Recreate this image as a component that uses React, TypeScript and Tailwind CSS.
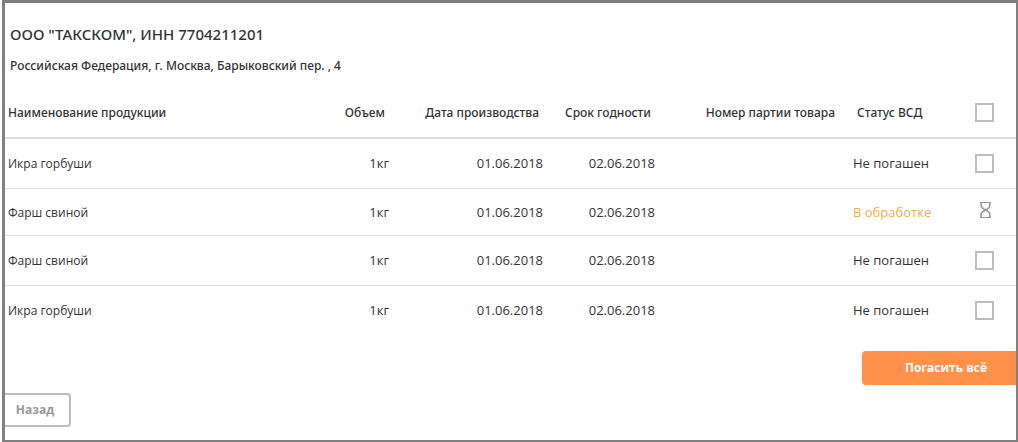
import { useState } from 'react'
import clsx from 'clsx'

type Item = {
  id: number
  name: string
  volume: string
  produced: string
  expires: string
  batch: string
  pending?: boolean
}

const items: Item[] = [
  { id: 1, name: 'Икра горбуши', volume: '1кг', produced: '01.06.2018', expires: '02.06.2018', batch: '' },
  { id: 2, name: 'Фарш свиной', volume: '1кг', produced: '01.06.2018', expires: '02.06.2018', batch: '', pending: true },
  { id: 3, name: 'Фарш свиной', volume: '1кг', produced: '01.06.2018', expires: '02.06.2018', batch: '' },
  { id: 4, name: 'Икра горбуши', volume: '1кг', produced: '01.06.2018', expires: '02.06.2018', batch: '' },
]

const selectable = items.filter((item) => !item.pending).map((item) => item.id)

function Checkbox({ label, checked, onChange }: { label: string; checked: boolean; onChange: () => void }) {
  return (
    <input
      type="checkbox"
      aria-label={label}
      checked={checked}
      onChange={onChange}
      className="mx-auto block size-[19px] cursor-pointer appearance-none border-2 border-[#bdbdbd] bg-white checked:bg-[#ff914a]"
    />
  )
}

function Hourglass() {
  return (
    <svg viewBox="0 0 13 16" className="mx-auto mb-1 block h-4 w-[13px]" fill="none" stroke="#999" role="img" aria-label="В обработке">
      <path d="M2 .5h11M2 15.5h11" />
      <path d="M3.2 1v3c0 1.6 1.1 2.3 4.3 4 3.2-1.7 4.3-2.4 4.3-4V1M3.2 15v-3c0-1.6 1.1-2.3 4.3-4 3.2 1.7 4.3 2.4 4.3 4v3" strokeWidth="1.6" />
    </svg>
  )
}

export default function App() {
  const [selected, setSelected] = useState<number[]>([])
  const allSelected = selected.length === selectable.length

  const toggle = (id: number) =>
    setSelected((prev) => (prev.includes(id) ? prev.filter((x) => x !== id) : [...prev, id]))

  return (
    <div className="bg-white pl-0.5 font-['Open_Sans','Noto_Sans',sans-serif] text-[#333]">
      <main className="border-t-3 border-r-2 border-b-2 border-l-3 border-[#808080] pb-[13px]">
        <header className="px-[5px] pt-[19px] font-['Noto_Sans','Open_Sans',sans-serif]">
          <h1 className="text-[15px] leading-6 font-medium">ООО "ТАКСКОМ", ИНН 7704211201</h1>
          <p className="mt-2.5 text-xs leading-5 font-medium">Российская Федерация, г. Москва, Барыковский пер. , 4</p>
        </header>

        <table className="mt-3 w-full table-fixed border-collapse text-[13px] leading-5">
          <colgroup>
            <col />
            <col className="w-[64px]" />
            <col className="w-[154px]" />
            <col className="w-[112px]" />
            <col className="w-[184px]" />
            <col className="w-[110px]" />
            <col className="w-[63px]" />
          </colgroup>
          <thead className="font-['Noto_Sans','Open_Sans',sans-serif]">
            <tr className="h-[50px] border-b-2 border-[#ddd] text-xs whitespace-nowrap *:font-medium">
              <th scope="col" className="pl-[3px] text-left">Наименование продукции</th>
              <th scope="col" className="pr-2 text-right">Объем</th>
              <th scope="col" className="pr-2 text-right">Дата производства</th>
              <th scope="col" className="pr-2 text-right">Срок годности</th>
              <th scope="col" className="pr-2 text-right">Номер партии товара</th>
              <th scope="col" className="pl-[14px] text-left">Статус ВСД</th>
              <td>
                <Checkbox
                  label="Выбрать всё"
                  checked={allSelected}
                  onChange={() => setSelected(allSelected ? [] : selectable)}
                />
              </td>
            </tr>
          </thead>
          <tbody>
            {items.map((item) => (
              <tr
                key={item.id}
                className={clsx('border-b border-[#ddd] whitespace-nowrap last:border-b-0', item.pending ? 'h-[47px]' : 'h-[50px]')}
              >
                <td className="pt-0.5 pl-[3px] text-xs">{item.name}</td>
                <td className="pr-1 text-right">{item.volume}</td>
                <td className="pr-1 text-right">{item.produced}</td>
                <td className="pr-1 text-right">{item.expires}</td>
                <td className="pr-1 text-right">{item.batch}</td>
                <td className={clsx('pl-[10px]', item.pending && 'text-[#f0ad4e]')}>
                  {item.pending ? 'В обработке' : 'Не погашен'}
                </td>
                <td>
                  {item.pending ? (
                    <Hourglass />
                  ) : (
                    <Checkbox label={item.name} checked={selected.includes(item.id)} onChange={() => toggle(item.id)} />
                  )}
                </td>
              </tr>
            ))}
          </tbody>
        </table>

        <div className="mt-4 flex justify-end">
          <button type="button" className="h-[34px] w-[154px] rounded-l bg-[#ff914a] pl-[14px] text-xs font-bold text-white">
            Погасить всё
          </button>
        </div>
        <button
          type="button"
          className="mt-2 block h-[34px] w-[66px] rounded-r border-2 border-l-0 border-[#bdbdbd] pr-1 text-xs font-bold text-[#999]"
        >
          Назад
        </button>
      </main>
    </div>
  )
}
